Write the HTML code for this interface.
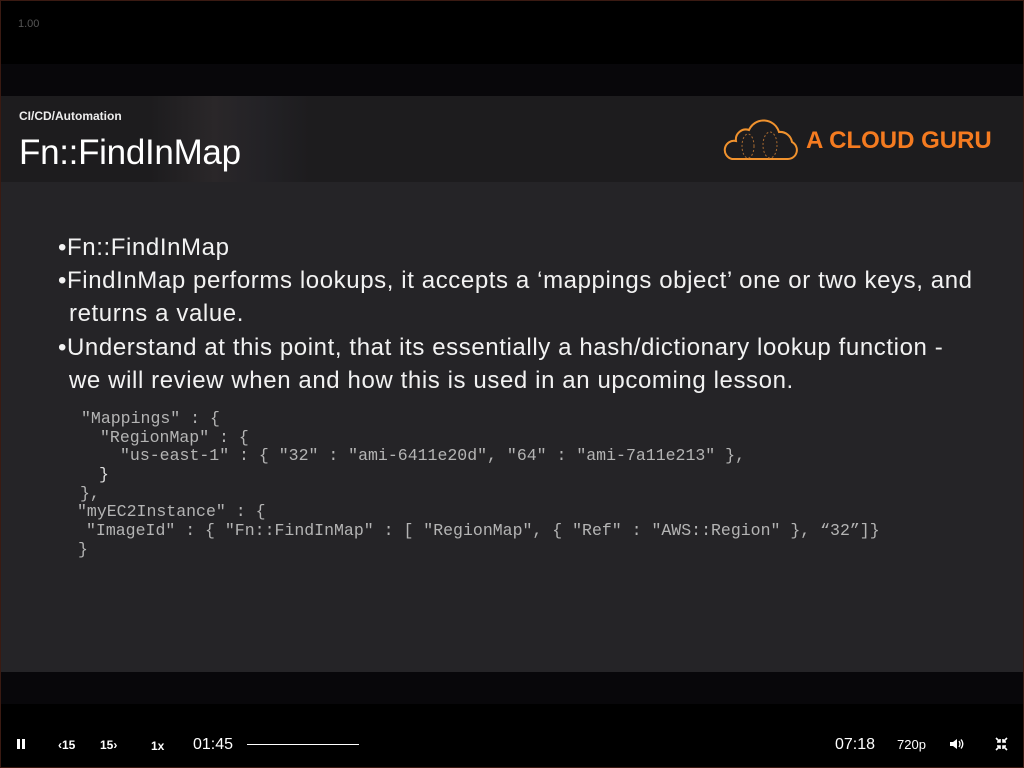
<!DOCTYPE html>
<html><head><meta charset="utf-8"><style>
*{margin:0;padding:0;box-sizing:border-box}
body{width:1024px;height:768px;background:#000;position:relative;overflow:hidden;font-family:"Liberation Sans",sans-serif;color:#fff}
.a{position:absolute;white-space:nowrap}
.code{position:absolute;font-family:"Liberation Mono",monospace;font-size:16.55px;color:#b4b4b4;white-space:pre;line-height:19px}
.b{font-size:24px;color:#f2f2f2;line-height:33.5px;letter-spacing:0.6px}
</style></head><body>
<div class="a" style="left:0;top:0;width:1024px;height:768px;border:1px solid #3a1a12"></div>
<div class="a" style="left:18px;top:18px;font-size:11px;color:#555">1.00</div>
<div class="a" style="left:1px;top:64px;width:1022px;height:32px;background:#08070a"></div>
<div class="a" style="left:1px;top:96px;width:1022px;height:86px;background:#1d1c1e"></div>
<div class="a" style="left:150px;top:96px;width:160px;height:86px;background:linear-gradient(90deg,#1d1c1e,#2a2729 40%,#232226 70%,#1d1c1e)"></div>
<div class="a" style="left:19px;top:109px;font-size:12px;font-weight:bold;color:#eee">CI/CD/Automation</div>
<div class="a" style="left:19px;top:133px;font-size:35px;color:#fff;letter-spacing:-0.3px">Fn::FindInMap</div>
<svg class="a" style="left:722px;top:118px" width="78" height="44" viewBox="0 0 78 44">
<path d="M10 41 H66 A9 9 0 0 0 70 24 A12 12 0 0 0 57 14 A16 16 0 0 0 27 12 A10 10 0 0 0 14 23 A9 9 0 0 0 10 41 Z" fill="none" stroke="#f0922e" stroke-width="2"/>
<ellipse cx="26" cy="28" rx="6" ry="12" fill="none" stroke="#a86a30" stroke-width="1" stroke-dasharray="2 2"/>
<ellipse cx="48" cy="27" rx="7" ry="13" fill="none" stroke="#a86a30" stroke-width="1" stroke-dasharray="2 2"/>
</svg>
<div class="a" style="left:806px;top:127px;font-size:24px;font-weight:bold;color:#f57b20">A CLOUD GURU</div>
<div class="a" style="left:1px;top:182px;width:1022px;height:490px;background:#252427"></div>
<div class="a b" style="left:58px;top:231px">•Fn::FindInMap</div>
<div class="a b" style="left:58px;top:264px">•FindInMap performs lookups, it accepts a ‘mappings object’ one or two keys, and</div>
<div class="a b" style="left:69px;top:297px">returns a value.</div>
<div class="a b" style="left:58px;top:331px">•Understand at this point, that its essentially a hash/dictionary lookup function -</div>
<div class="a b" style="left:69px;top:364px">we will review when and how this is used in an upcoming lesson.</div>
<div class="code" style="left:81px;top:409px">"Mappings" : {</div>
<div class="code" style="left:100px;top:428px">"RegionMap" : {</div>
<div class="code" style="left:120px;top:446px">"us-east-1" : { "32" : "ami-6411e20d", "64" : "ami-7a11e213" },</div>
<div class="code" style="left:99px;top:465px;color:#ddd">}</div>
<div class="code" style="left:80px;top:484px">},</div>
<div class="code" style="left:77px;top:502px">"myEC2Instance" : {</div>
<div class="code" style="left:86px;top:521px">"ImageId" : { "Fn::FindInMap" : [ "RegionMap", { "Ref" : "AWS::Region" }, “32”]}</div>
<div class="code" style="left:78px;top:540px">}</div>
<div class="a" style="left:1px;top:672px;width:1022px;height:32px;background:#08070a"></div>
<div class="a" style="left:17px;top:739px;width:3px;height:10px;background:#fff"></div>
<div class="a" style="left:22px;top:739px;width:3px;height:10px;background:#fff"></div>
<div class="a" style="left:58px;top:738px;font-size:12px;font-weight:bold">‹15</div>
<div class="a" style="left:100px;top:738px;font-size:12px;font-weight:bold">15›</div>
<div class="a" style="left:151px;top:739px;font-size:12px;font-weight:bold">1x</div>
<div class="a" style="left:193px;top:736px;font-size:16px">01:45</div>
<div class="a" style="left:247px;top:744px;width:112px;height:1px;background:#fff"></div>
<div class="a" style="left:835px;top:736px;font-size:16px">07:18</div>
<div class="a" style="left:897px;top:737px;font-size:13px">720p</div>
<svg class="a" style="left:949px;top:738px" width="16" height="12" viewBox="0 0 16 12"><path d="M1 4h3l4-3v10l-4-3H1z" fill="#fff"/><path d="M10 3q2 3 0 6M12 1.5q3.5 4.5 0 9" stroke="#fff" fill="none" stroke-width="1.3"/></svg>
<svg class="a" style="left:995px;top:737px" width="13" height="14" viewBox="0 0 13 14"><path d="M1 1l4 4M12 1l-4 4M1 13l4-4M12 13l-4-4M5 2v3H2M8 2v3h3M5 12V9H2M8 12V9h3" stroke="#fff" stroke-width="1.6" fill="none"/></svg>
</body></html>
